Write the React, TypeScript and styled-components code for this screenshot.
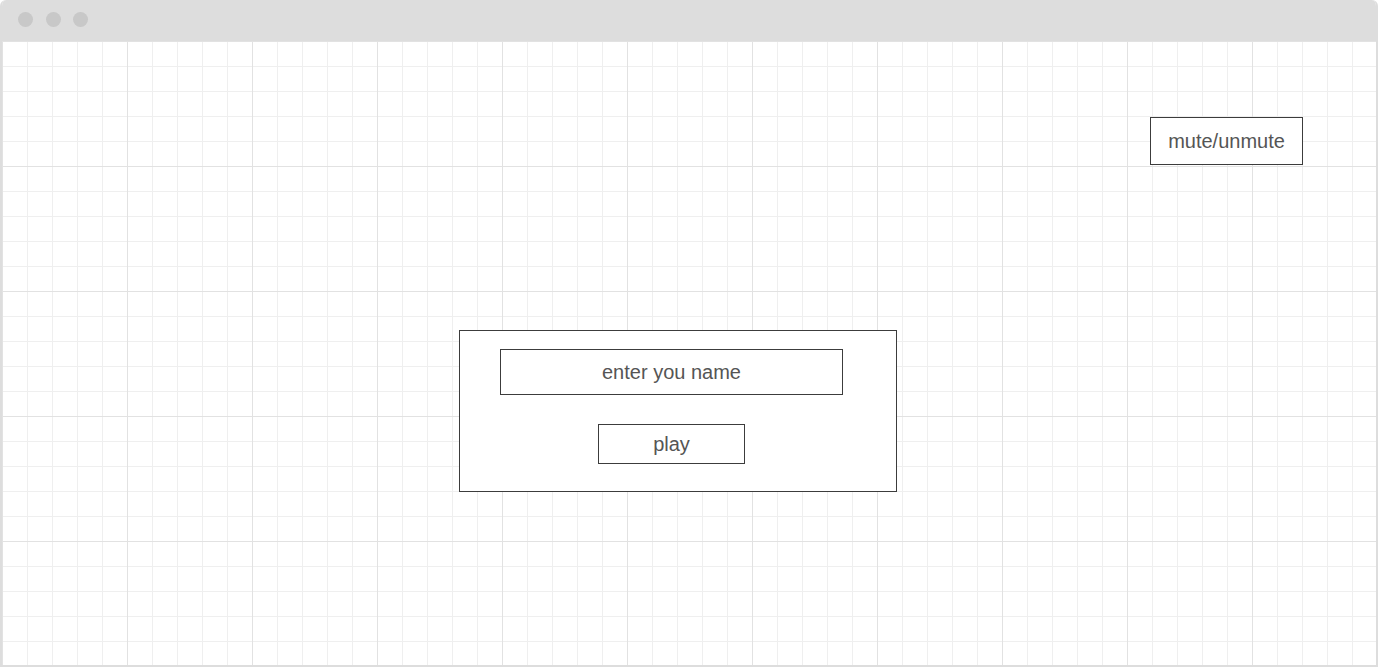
import React from "react";
import styled, { createGlobalStyle } from "styled-components";

const GlobalStyle = createGlobalStyle`
  html, body {
    margin: 0;
    padding: 0;
    background: #ffffff;
  }
  * { box-sizing: border-box; }
`;

const Window = styled.div`
  width: 1378px;
  height: 667px;
  display: flex;
  flex-direction: column;
  border: 2px solid #dddddd;
  border-top: none;
  border-radius: 6px 6px 0 0;
  overflow: hidden;
  font-family: "Liberation Sans", Arial, sans-serif;
`;

const TitleBar = styled.div`
  height: 41px;
  flex: 0 0 41px;
  background: #dddddd;
  display: flex;
  align-items: flex-start;
  gap: 12.5px;
  padding: 12px 0 0 18px;
  margin: 0 -2px;
`;

const Dot = styled.span`
  width: 15px;
  height: 15px;
  border-radius: 50%;
  background: #c8c8c8;
`;

const Canvas = styled.div`
  flex: 1;
  display: flex;
  flex-direction: column;
  background-color: #ffffff;
  background-image:
    linear-gradient(to right, #e2e2e2 1px, transparent 1px),
    linear-gradient(to bottom, #e2e2e2 1px, transparent 1px),
    linear-gradient(to right, #efefef 1px, transparent 1px),
    linear-gradient(to bottom, #efefef 1px, transparent 1px);
  background-size: 125px 125px, 125px 125px, 25px 25px, 25px 25px;
`;

const TopRow = styled.div`
  display: flex;
  justify-content: flex-end;
  padding: 76px 73px 0 0;
`;

const Box = styled.div<{ $w: number; $h: number }>`
  width: ${(p) => p.$w}px;
  height: ${(p) => p.$h}px;
  border: 1px solid #3c3c3c;
  background: #ffffff;
  display: flex;
  align-items: center;
  justify-content: center;
  font-size: 20px;
  color: #555555;
`;

const Panel = styled.div`
  width: 438px;
  height: 162px;
  margin: 165px 0 0 457px;
  border: 1px solid #3c3c3c;
  background: #ffffff;
  padding: 18px 0 0 40px;
`;

const Form = styled.div`
  width: 343px;
  display: flex;
  flex-direction: column;
  align-items: center;
  gap: 29px;
`;

export default function App() {
  return (
    <>
      <GlobalStyle />
      <Window>
        <TitleBar>
          <Dot />
          <Dot />
          <Dot />
        </TitleBar>
        <Canvas>
          <TopRow>
            <Box $w={153} $h={48}>mute/unmute</Box>
          </TopRow>
          <Panel>
            <Form>
              <Box $w={343} $h={46}>enter you name</Box>
              <Box $w={147} $h={40}>play</Box>
            </Form>
          </Panel>
        </Canvas>
      </Window>
    </>
  );
}
